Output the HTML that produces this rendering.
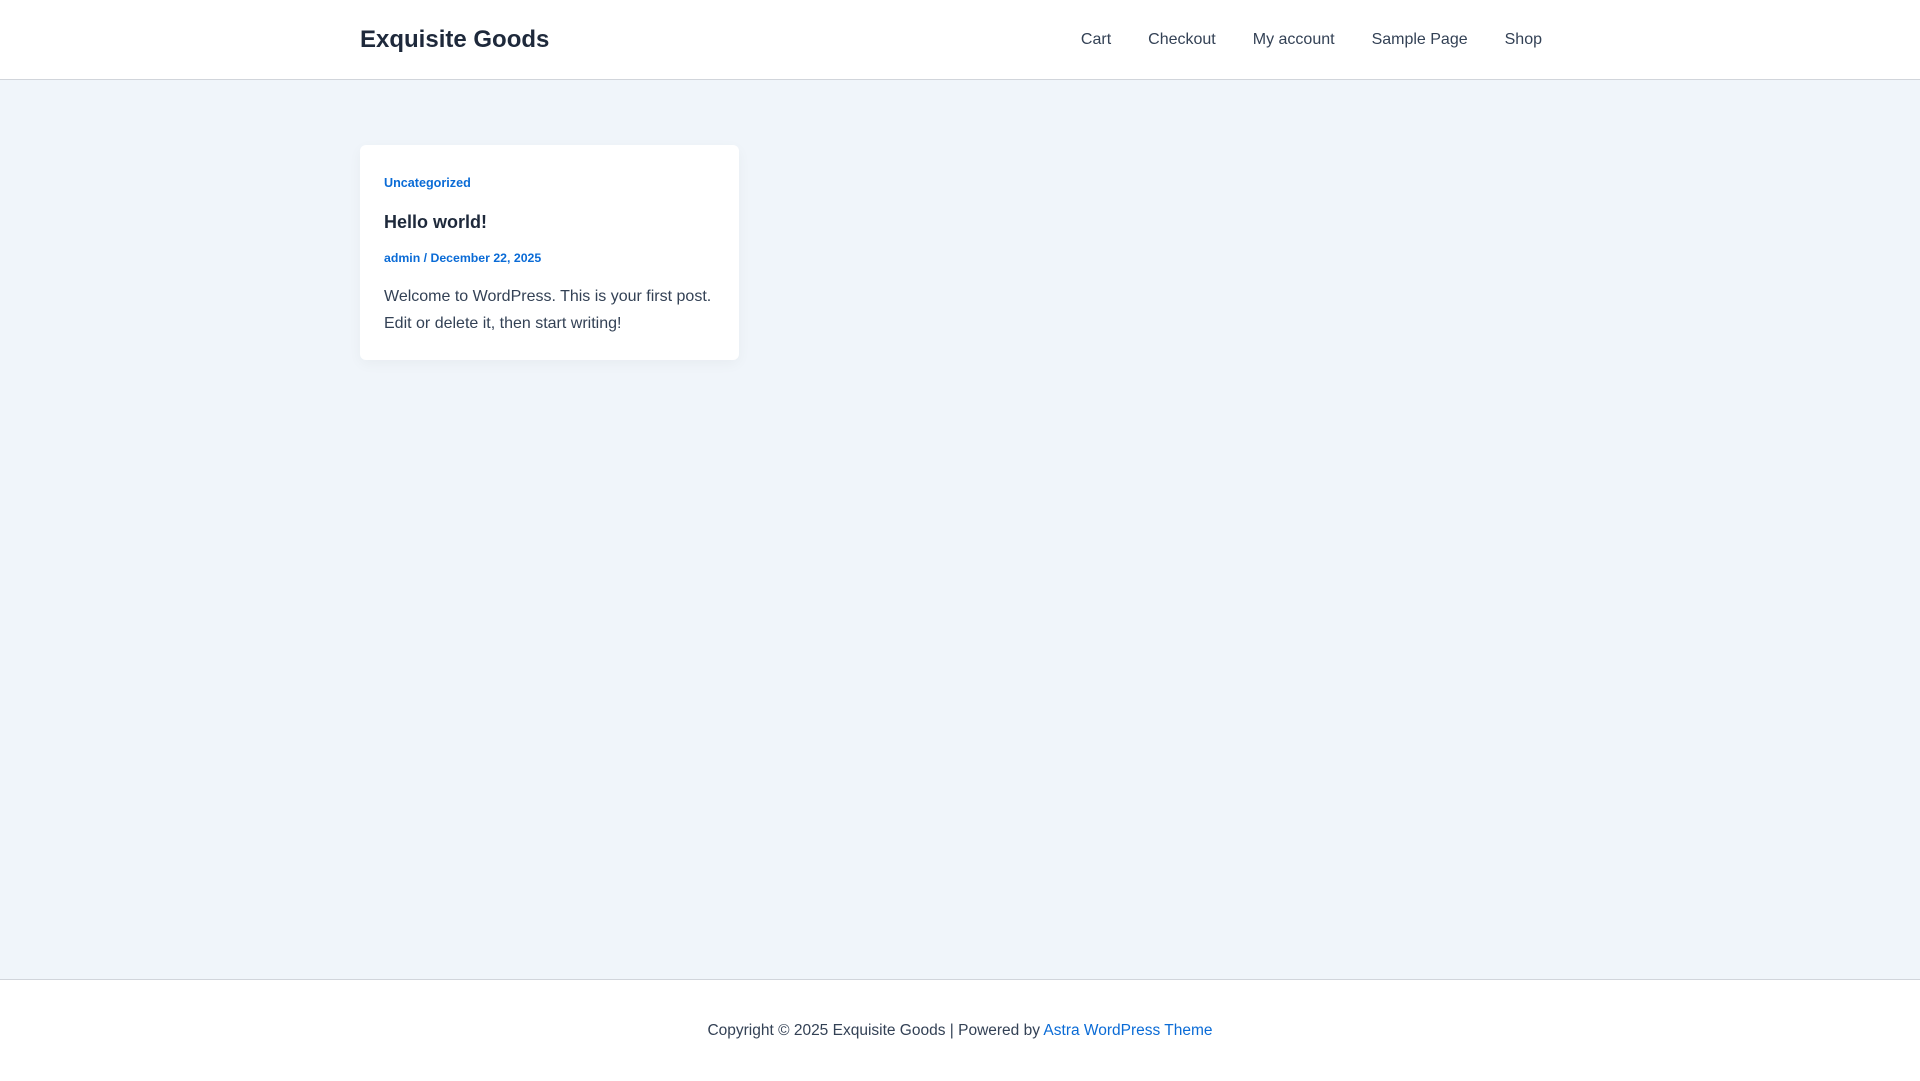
<!DOCTYPE html>
<html><head><meta charset="utf-8"><style>
body{margin:0;width:1920px;height:1080px;background:#f0f5fa;font-family:"Liberation Sans",sans-serif;color:#334155;position:relative;overflow:hidden}
header{position:absolute;top:0;left:0;width:1920px;height:79px;background:#fff;border-bottom:1px solid #d1d5db}
.logo{position:absolute;left:360px;top:26px;font-size:24px;font-weight:bold;color:#1e293b}
nav{position:absolute;right:378px;top:31px;font-size:16px;color:#334155}
nav span{margin-left:37px}
.card{position:absolute;left:360px;top:145px;width:379px;height:215px;background:#fff;border-radius:6px;box-shadow:0 4px 14px rgba(0,0,0,0.04)}
.cat{position:absolute;left:24px;top:31px;font-size:12.6px;font-weight:bold;color:#0a6bd6}
.t{position:absolute;left:24px;top:67px;font-size:18px;font-weight:bold;color:#1e293b}
.meta{position:absolute;left:24px;top:106px;font-size:12.3px;font-weight:bold;color:#0a6bd6}
.ex{position:absolute;left:24px;top:138px;font-size:16px;line-height:27px;color:#334155;width:350px}
footer{position:absolute;top:979px;left:0;width:1920px;height:101px;background:#fff;border-top:1px solid #d1d5db;text-align:center}
footer div{margin-top:42px;font-size:15.5px}
a{color:#0a6bd6;text-decoration:none}
</style></head><body>
<header><div class="logo">Exquisite Goods</div>
<nav><span>Cart</span><span>Checkout</span><span>My account</span><span>Sample Page</span><span>Shop</span></nav></header>
<div class="card"><div class="cat">Uncategorized</div><div class="t">Hello world!</div><div class="meta">admin / December 22, 2025</div>
<div class="ex">Welcome to WordPress. This is your first post. Edit or delete it, then start writing!</div></div>
<footer><div>Copyright © 2025 Exquisite Goods | Powered by <a>Astra WordPress Theme</a></div></footer>
</body></html>
